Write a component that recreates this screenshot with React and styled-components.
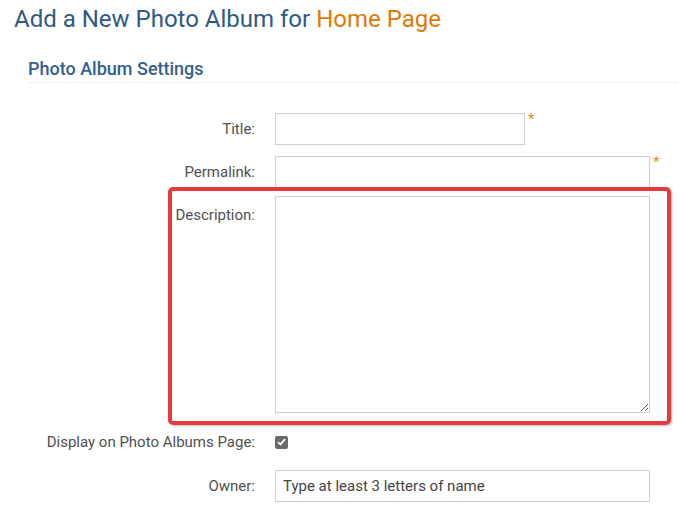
import styled, { createGlobalStyle } from "styled-components";

const GlobalStyle = createGlobalStyle`
  body {
    margin: 0;
    background: #fff;
    font-family: Roboto, "Liberation Sans", sans-serif;
  }
`;

const Page = styled.div`
  padding: 4px 0 0 14px;
  width: 679px;
  box-sizing: border-box;
`;

const Title = styled.h1`
  margin: 0;
  font-size: 24px;
  line-height: 30px;
  font-weight: 400;
  color: #2f5a82;
  span {
    color: #e07a06;
  }
`;

const Section = styled.section`
  margin-top: 23px;
`;

const SectionHead = styled.h2`
  margin: 0 0 0 14px;
  font-size: 18px;
  line-height: 24px;
  font-weight: 500;
  color: #33618c;
  padding-bottom: 1px;
  border-bottom: 1px solid #efefef;
`;

const Form = styled.form`
  padding-top: 30px;
  display: flex;
  flex-direction: column;
`;

const Row = styled.div`
  position: relative;
  display: grid;
  grid-template-columns: 227px 1fr;
  column-gap: 20px;
  align-items: ${(p) => (p.$center ? "center" : "start")};
  margin-left: 14px;
  margin-top: ${(p) => p.$gap || 0}px;
`;

const Label = styled.label`
  text-align: right;
  font-size: 15px;
  line-height: ${(p) => (p.$center ? "20px" : "32px")};
  padding-top: ${(p) => (p.$top ? 3 : 0)}px;
  color: #505050;
`;

const Field = styled.div`
  display: flex;
  align-items: flex-start;
`;

const TextInput = styled.input`
  box-sizing: border-box;
  width: ${(p) => p.$w}px;
  height: 32px;
  border: 1px solid #cfcfcf;
  padding: 0 7px;
  font-family: inherit;
  font-size: 15px;
  color: #444;
  outline: none;
  &::placeholder {
    color: #444;
  }
`;

const Required = styled.span`
  margin-left: 3px;
  margin-top: -3px;
  font-size: 15px;
  line-height: 18px;
  color: #e88a1a;
`;

const TextArea = styled.textarea`
  box-sizing: border-box;
  width: 375px;
  height: 217px;
  border: 1px solid #cfcfcf;
  font-family: inherit;
  font-size: 15px;
  outline: none;
  display: block;
`;

const Highlight = styled.div`
  position: absolute;
  left: 140px;
  top: -9px;
  right: 8px;
  bottom: -12px;
  border: 4px solid #e8393b;
  border-radius: 5px;
  box-shadow: 1px 1px 2px rgba(0, 0, 0, 0.25);
  pointer-events: none;
  z-index: 2;
`;

const Check = styled.span`
  width: 13px;
  height: 13px;
  border-radius: 2px;
  background: #6a6a6a;
  display: flex;
  align-items: center;
  justify-content: center;
`;

export default function App() {
  return (
    <Page>
      <GlobalStyle />
      <Title>
        Add a New Photo Album for <span>Home Page</span>
      </Title>
      <Section>
        <SectionHead>Photo Album Settings</SectionHead>
        <Form>
          <Row>
            <Label>Title:</Label>
            <Field>
              <TextInput $w={250} />
              <Required>*</Required>
            </Field>
          </Row>
          <Row $gap={11}>
            <Label>Permalink:</Label>
            <Field>
              <TextInput $w={375} />
              <Required>*</Required>
            </Field>
          </Row>
          <Row $gap={8}>
            <Label $top>Description:</Label>
            <Field>
              <TextArea />
            </Field>
            <Highlight />
          </Row>
          <Row $gap={19} $center>
            <Label $center>Display on Photo Albums Page:</Label>
            <Field>
              <Check>
                <svg width="9" height="8" viewBox="0 0 9 8">
                  <path d="M1 4.2 L3.4 6.4 L8 1.2" fill="none" stroke="#fff" strokeWidth="1.8" />
                </svg>
              </Check>
            </Field>
          </Row>
          <Row $gap={18}>
            <Label>Owner:</Label>
            <Field>
              <TextInput $w={375} placeholder="Type at least 3 letters of name" />
            </Field>
          </Row>
        </Form>
      </Section>
    </Page>
  );
}
